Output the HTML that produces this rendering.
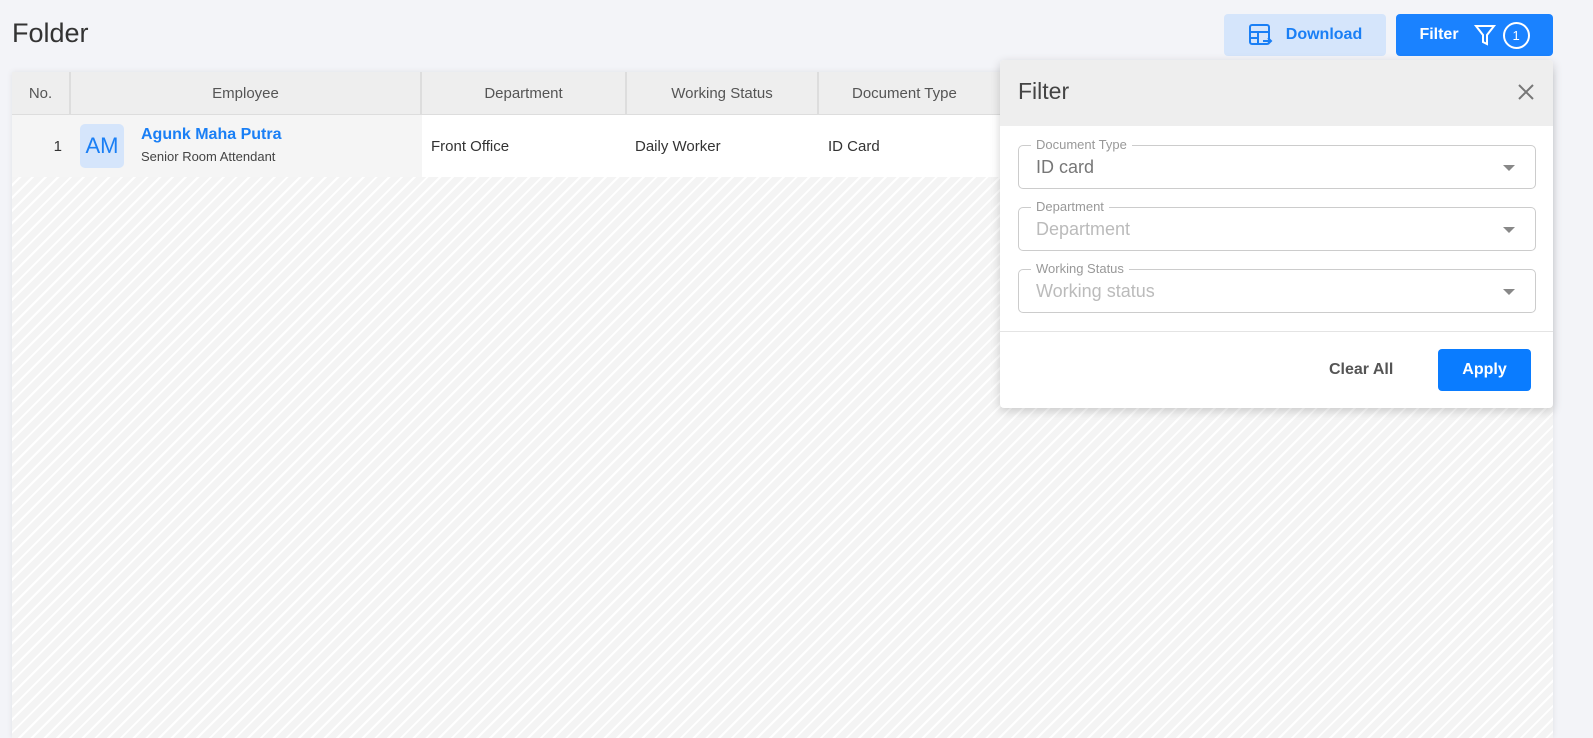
<!DOCTYPE html>
<html><head><style>
*{box-sizing:border-box;margin:0;padding:0}
body{width:1593px;height:738px;overflow:hidden;background:#f3f4f8;font-family:"Liberation Sans",sans-serif;position:relative;color:#333}
.abs{position:absolute}
.title{left:12px;top:18px;font-size:27px;color:#333}
.btn{top:14px;height:42px;border-radius:4px;display:flex;align-items:center;justify-content:center;font-size:16px;font-weight:bold}
.table{left:12px;top:72px;width:1541px;height:666px;background:repeating-linear-gradient(135deg,#f4f4f4 0 7px,#fff 7px 9px);box-shadow:0 0 6px rgba(0,0,0,.08)}
.hd{top:0;height:43px;background:#eee;border-bottom:1px solid #ddd;border-right:2px solid #ddd;display:flex;align-items:center;justify-content:center;font-size:15px;color:#555}
.cell{top:43px;height:62px;display:flex;align-items:center;font-size:15px;color:#333}
.panel{left:1000px;top:60px;width:553px;height:348px;background:#fff;border-radius:4px;box-shadow:0 3px 10px rgba(0,0,0,.18);overflow:hidden}
.fld{left:18px;width:518px;height:44px;border:1px solid #ccc;border-radius:5px}
.fld .lb{position:absolute;left:12px;top:-9px;background:#fff;padding:0 5px;font-size:13px;color:#999}
.fld .v{position:absolute;left:17px;top:11px;font-size:18px;color:#bbb}
.fld .ar{position:absolute;right:20px;top:19px;border-left:6px solid transparent;border-right:6px solid transparent;border-top:6px solid #888}
</style></head><body>
<div class="abs title">Folder</div>
<div class="abs btn" style="left:1224px;width:162px;background:#d5e5fb;color:#1a7ff5">
<svg width="26" height="24" viewBox="0 0 26 24" style="margin-right:12px" fill="none" stroke="#1a7ff5" stroke-width="2"><rect x="2" y="2" width="19" height="19" rx="2"/><path d="M2 9H21M10 9V21M2 15H10M15 18H23M20 15L23 18L20 21"/></svg>Download</div>
<div class="abs btn" style="left:1396px;width:157px;background:#1a82ff;color:#fff">Filter
<svg width="24" height="24" viewBox="0 0 24 24" style="margin-left:14px" fill="none" stroke="#fff" stroke-width="2"><path d="M3 3H21L14 12V21L10 19V12Z"/></svg>
<span style="margin-left:6px;width:27px;height:27px;border:2px solid #fff;border-radius:50%;display:inline-flex;align-items:center;justify-content:center;font-size:13px;font-weight:normal">1</span></div>
<div class="abs table">
<div class="abs hd" style="left:0;width:59px">No.</div>
<div class="abs hd" style="left:59px;width:351px">Employee</div>
<div class="abs hd" style="left:410px;width:205px">Department</div>
<div class="abs hd" style="left:615px;width:192px">Working Status</div>
<div class="abs hd" style="left:807px;width:734px;border-right:0"><span style="position:absolute;left:33px">Document Type</span></div>
<div class="abs cell" style="left:0;width:410px;background:#f5f5f5"></div>
<div class="abs cell" style="left:410px;width:1131px;background:#fff"></div>
<div class="abs cell" style="left:0;width:50px;justify-content:flex-end">1</div>
<div class="abs" style="left:68px;top:52px;width:44px;height:44px;border-radius:5px;background:#d5e5fb;color:#1a7ff5;font-size:22px;display:flex;align-items:center;justify-content:center">AM</div>
<div class="abs" style="left:129px;top:54px;font-size:16px;font-weight:bold;color:#1a7ff5">Agunk Maha Putra</div>
<div class="abs" style="left:129px;top:77px;font-size:13px;color:#444">Senior Room Attendant</div>
<div class="abs cell" style="left:419px">Front Office</div>
<div class="abs cell" style="left:623px">Daily Worker</div>
<div class="abs cell" style="left:816px">ID Card</div>
</div>
<div class="abs panel">
<div class="abs" style="left:0;top:0;width:553px;height:66px;background:#eee"></div>
<div class="abs" style="left:18px;top:18px;font-size:23px;color:#444">Filter</div>
<svg class="abs" style="left:516px;top:22px" width="20" height="20" viewBox="0 0 20 20" stroke="#777" stroke-width="2"><path d="M3 3L17 17M17 3L3 17"/></svg>
<div class="abs fld" style="top:85px"><span class="lb">Document Type</span><span class="v" style="color:#777">ID card</span><span class="ar"></span></div>
<div class="abs fld" style="top:147px"><span class="lb">Department</span><span class="v">Department</span><span class="ar"></span></div>
<div class="abs fld" style="top:209px"><span class="lb">Working Status</span><span class="v">Working status</span><span class="ar"></span></div>
<div class="abs" style="left:0;top:271px;width:553px;height:1px;background:#e4e4e4"></div>
<div class="abs" style="left:329px;top:301px;font-size:16px;font-weight:bold;color:#555">Clear All</div>
<div class="abs" style="left:438px;top:289px;width:93px;height:42px;background:#0a7cff;border-radius:4px;color:#fff;font-size:16px;font-weight:bold;display:flex;align-items:center;justify-content:center">Apply</div>
</div>
</body></html>
